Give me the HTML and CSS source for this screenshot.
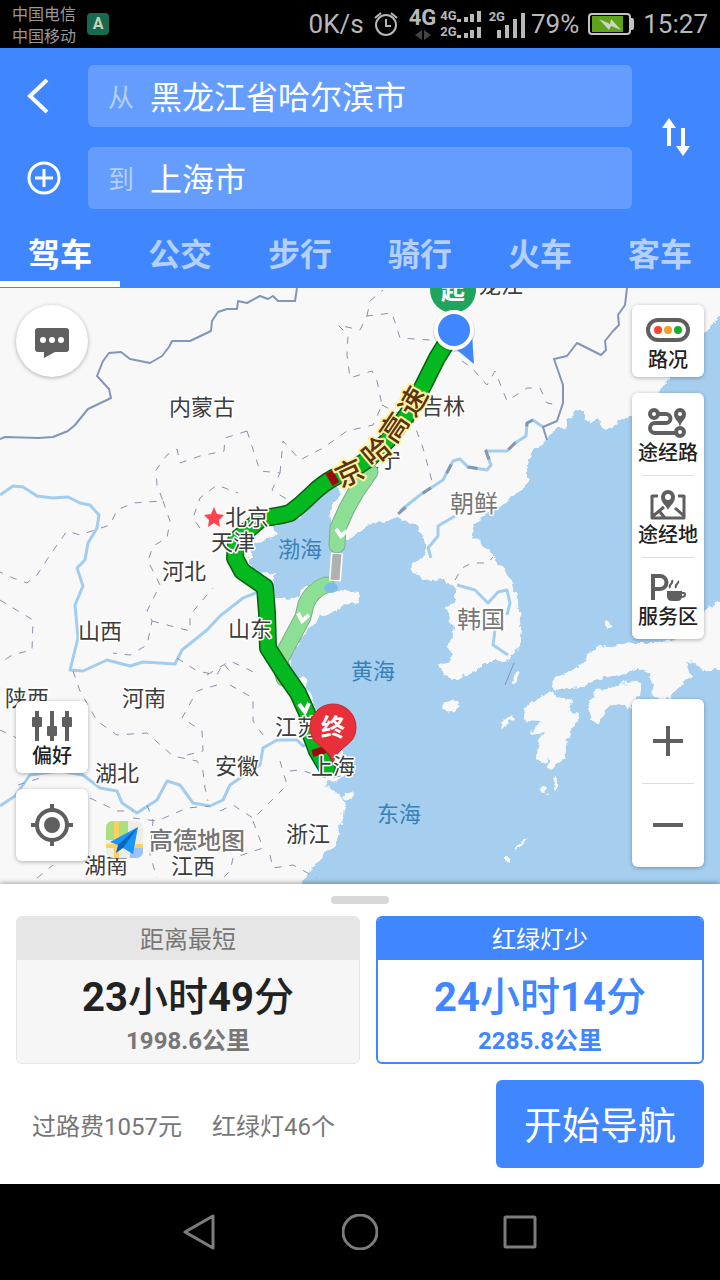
FILE: index.html
```html
<!DOCTYPE html>
<html lang="zh-CN">
<head>
    <meta charset="UTF-8">
    <meta name="viewport" content="width=device-width, initial-scale=1.0">
    <title>高德地图</title>
    <link rel="stylesheet" href="styles.css">
</head>
<body>
    <div class="app">
        <div class="status-bar">
            <div class="carriers">
                <span>中国电信</span>
                <span>中国移动</span>
            </div>
            <span class="status-badge">A</span>
            <div class="status-right">
                <span>0K/s</span>
                <svg class="status-alarm" viewBox="0 0 24 26" fill="none" stroke="currentColor" stroke-width="2">
                    <circle cx="12" cy="14" r="10"/>
                    <path d="M12 8v7h5M1 7l6-5M23 7l-6-5"/>
                </svg>
                <div class="net-type">
                    <span>4G</span>
                    <svg viewBox="0 0 16 10" fill="#444"><path d="M0 5l7-5v10zM16 5L9 0v10z"/></svg>
                </div>
                <div class="net-sims">
                    <div class="net-sim">
                        <span>4G</span>
                        <svg viewBox="0 0 24 12" fill="currentColor"><path d="M0 9h4v3H0zM7 7h4v5H7zM13 4h4v8h-4zM20 1h4v11h-4z"/></svg>
                    </div>
                    <div class="net-sim">
                        <span>2G</span>
                        <svg viewBox="0 0 24 12" fill="currentColor"><path d="M0 9h4v3H0zM7 7h4v5H7zM13 4h4v8h-4zM20 1h4v11h-4z"/></svg>
                    </div>
                </div>
                <div class="net-second">
                    <span>2G</span>
                    <svg viewBox="0 0 28 25" fill="currentColor"><path d="M0 17h4v8H0zM8 12h4v13H8zM16 6h4v19h-4zM24 0h4v25h-4z"/></svg>
                </div>
                <span>79%</span>
                <svg class="status-battery" viewBox="0 0 46 22">
                    <rect x="1" y="1" width="41" height="20" rx="3" fill="none" stroke="#c4c4c4" stroke-width="2"/>
                    <rect x="4" y="3" width="31" height="16" fill="#5fa31b"/>
                    <path d="M43 5h1q2 0 2 3v6q0 3-2 3h-1z" fill="#c4c4c4"/>
                    <path d="M11 6l11 5 1-5 10 11-10-4-2 4z" fill="#cdd6c4"/>
                </svg>
                <span>15:27</span>
            </div>
        </div>

        <header class="header">
            <form class="route-form">
                <button type="button" class="icon-button back" aria-label="返回">
                    <svg viewBox="0 0 22 36" fill="none" stroke="currentColor" stroke-width="4"><path d="M20 2L3 18l17 16"/></svg>
                </button>
                <div class="field">
                    <label for="from">从</label>
                    <input type="text" id="from" value="黑龙江省哈尔滨市">
                </div>
                <button type="button" class="icon-button swap" aria-label="交换起终点">
                    <svg viewBox="0 0 28 38" fill="currentColor"><path d="M7 0l7 10H9v18H5V10H0zM21 38l7-10h-5V10h-4v18h-5z"/></svg>
                </button>
                <button type="button" class="icon-button add" aria-label="添加途经点">
                    <svg viewBox="0 0 34 34" fill="none" stroke="currentColor" stroke-width="3"><circle cx="17" cy="17" r="15"/><path d="M17 8v18M8 17h18"/></svg>
                </button>
                <div class="field">
                    <label for="to">到</label>
                    <input type="text" id="to" value="上海市">
                </div>
            </form>
            <nav class="tabs">
                <a href="#" class="tab active">驾车</a>
                <a href="#" class="tab">公交</a>
                <a href="#" class="tab">步行</a>
                <a href="#" class="tab">骑行</a>
                <a href="#" class="tab">火车</a>
                <a href="#" class="tab">客车</a>
            </nav>
        </header>

        <main class="map">
            <svg class="map-canvas" viewBox="0 288 720 596" preserveAspectRatio="xMidYMid slice">
                <defs>
                    <filter id="coast" filterUnits="userSpaceOnUse" x="0" y="288" width="720" height="596">
                        <feTurbulence type="fractalNoise" baseFrequency="0.12" numOctaves="3" seed="4"/>
                        <feDisplacementMap in="SourceGraphic" scale="9" xChannelSelector="R" yChannelSelector="G"/>
                    </filter>
                </defs>

                <!-- 海洋与陆地 -->
                <rect class="land" x="0" y="288" width="720" height="596"/>
                <g filter="url(#coast)">
                    <path class="sea" d="M740 290L720 316 704 333 660 391 650 405 632 416 607 430 597 421 590 423 583 411 575 411 567 425 553 431 547 441 533 450 526 465 526 488 507 501 480 518 473 525 473 536 490 551 500 565 512 582 518 600 521 633 515 653 505 663 485 663 472 673 455 680 440 672 438 663 452 660 448 647 455 630 450 617 443 608 455 600 455 590 442 578 422 580 410 568 422 557 427 548 420 530 415 523 400 518 390 521 367 525 350 538 333 547 331 521 330 510 342 494 333 486 320 495 300 518 273 525 280 535 267 538 255 545 250 551 250 562 258 572 275 573 273 582 275 597 295 598 305 587 328 580 338 590 360 592 358 603 338 608 322 617 308 628 288 657 292 673 305 680 315 707 340 751 354 765 350 775 323 785 337 791 345 801 343 818 337 835 337 845 323 855 313 868 300 884 300 900 740 900z"/>
                    <!-- 日本 -->
                    <path class="land" d="M740 595L720 600 703 611 673 640 653 643 607 646 597 648 580 665 553 680 555 690 583 688 593 680 620 676 637 668 650 673 652 685 653 697 670 700 678 686 693 678 685 663 692 660 703 670 740 670z"/>
                    <path class="land" d="M550 691L557 696 572 701 570 710 578 715 577 721 567 738 565 758 550 771 547 764 549 755 544 763 537 761 538 741 543 733 532 735 533 728 541 722 525 721 522 710 537 698z"/>
                    <path class="land" d="M587 703L600 688 612 689 630 680 642 685 640 695 630 710 620 703 605 708 600 723 592 720z"/>
                    <ellipse class="land" cx="451" cy="706" rx="9" ry="5" transform="rotate(-15 451 706)"/>
                    <ellipse class="land" cx="516" cy="677" rx="2" ry="8" transform="rotate(15 516 677)"/>
                    <path class="land" d="M500 727l6-6 5-6 2 3-7 7-4 4zM513 848l6-7 8-3-5 6-7 6zM506 855l4 3-1 4-3-2z"/>
                    <ellipse class="land" cx="544" cy="790" rx="4" ry="3"/>
                    <ellipse class="land" cx="555" cy="783" rx="2" ry="6"/>
                    <ellipse class="land" cx="608" cy="625" rx="3" ry="2"/>
                    <ellipse class="land" cx="349" cy="796" rx="5" ry="3"/>
                </g>

                <!-- 河流 -->
                <g class="river">
                    <path d="M0 495L13 486 23 487 37 496 53 498 68 497 80 503 90 505 99 515 97 528 88 543 85 560 77 568 83 586 75 605 78 638 70 670 83 671 107 660 130 666 143 662 175 664 182 650 207 630 220 616 243 598 258 592"/>
                    <path d="M0 806L15 796 30 775 60 771 83 775 100 788 117 791 122 803 137 813 157 800 167 781 180 785 193 803 210 806 223 800 230 785 243 776 260 765 263 748 277 740 297 740 303 746 318 741"/>
                    <path d="M543 427L533 420 527 423 526 436 515 443 507 451 486 451 491 465 487 470 468 467 460 459 453 461 443 480 420 495 400 511"/>
                    <path d="M455 516L438 526 438 536 428 548 431 558M457 585L475 590 488 603 498 592 507 590 510 603 507 615M495 630L493 645 508 655"/>
                </g>

                <!-- 国界 -->
                <g class="border">
                    <path d="M0 439L5 437 38 438 53 437 68 431 75 425 88 409 111 398 109 389 97 376 103 361 109 353 121 352 130 359 150 363 162 356 169 347 172 341 190 341 211 331 212 321 218 312 227 309 237 309 238 301 247 303 260 296 268 299 273 296 278 301 295 301 297 288"/>
                    <path d="M627 288L625 305 618 315 619 325 613 331 605 341 606 350 601 355 577 343 567 356 554 359 563 385 563 403 557 421 543 427 547 440"/>
                    <path class="border-part" d="M533 420L527 423 526 436 515 443 507 451 486 451 491 465 487 470 468 467 460 459 453 461 443 480 420 495 398 514"/>
                </g>
                <path class="sea-line" d="M514 663L505 685"/>

                <!-- 省界 -->
                <g class="province">
                    <path d="M247 431L225 438 224 451 200 456 180 463 177 449 167 455 156 470 157 485 163 501 133 503 117 510 110 525 80 535 67 531 50 555 37 575 27 583 13 578 0 572"/>
                    <path d="M163 501L170 521 167 538 153 546 148 561 160 585 147 611 152 621 147 645 130 655 113 653"/>
                    <path d="M152 621L190 631 190 615 213 588M200 528L193 518 200 498 217 485 238 493"/>
                    <path d="M247 431L260 471 280 473 272 490 288 500M280 473L283 441 300 460 323 448 347 431 373 425 382 405 377 381 372 371 350 378 347 355 348 335 338 325 360 330 367 316 392 313 400 338 430 340M367 316L370 301 383 290"/>
                    <path d="M382 405L413 421 423 448 433 485M462 361L472 368 487 385 495 371 507 401 527 388 540 388 547 403 560 405"/>
                    <path d="M0 600L33 620 32 650 12 655 0 663M73 671L80 691 97 721 117 735 147 733 173 756 197 761 203 771 205 788 208 801"/>
                    <path d="M177 658L197 671 217 675 223 663 233 675M217 685L197 691 182 718 202 731 203 751 183 756M90 798L117 811 133 811M133 818L157 821 187 808 210 806M147 805L153 821 150 855 157 878"/>
                    <path d="M207 675L230 661 260 675M230 685L253 698 253 721 263 735M280 761L287 785 257 815 253 821 263 848 233 858 230 871 220 881M270 855L273 868 293 865 317 878M220 811L233 805 253 818M290 771L300 770 327 778 363 773"/>
                    <path d="M455 580L462 568 472 563 488 563 493 557M37 878L53 865M0 730L17 738M18 785L40 778"/>
                </g>

                <g class="label">
                    <text x="357" y="467">辽宁</text>
                    <text x="421" y="414">吉林</text>
                    <text x="479" y="293">龙江</text>
                </g>

                <!-- 备选路线 -->
                <path class="alt-edge" d="M370 472L356 492 347 508 338 528 337 545M326 585Q313 589 306 604L303 617 280 660 284 678"/>
                <path class="alt-line" d="M370 472L356 492 347 508 338 528 337 545M326 585Q313 589 306 604L303 617 280 660 284 678"/>
                <path class="ferry-edge" d="M337 553L335 581"/>
                <path class="ferry" d="M337 554L335 580"/>
                <ellipse cx="331" cy="588" rx="7" ry="5" fill="#7dbce8"/>

                <!-- 主路线 -->
                <path class="route-edge" d="M450 337L437 358 422 388 407 415 388 440 370 458 352 470 335 477Q322 484 312 494T290 513Q275 517 262 518L236 540 235 558 242 571 265 587 267 613 268 648 282 670 298 693 307 713 311 735 317 751 327 768"/>
                <path class="route-line" d="M450 337L437 358 422 388 407 415 388 440 370 458 352 470 335 477Q322 484 312 494T290 513Q275 517 262 518L236 540 235 558 242 571 265 587 267 613 268 648 282 670 298 693 307 713 311 735 317 751 327 768"/>
                <path class="jam" d="M329 480L336 476M318 748L320 755"/>
                <path class="arrow" d="M336 529l5 7 6-5M298 613l4 8 7-6M299 704l6 8 4-9"/>

                <g class="label">
                    <text x="169" y="415">内蒙古</text>
                    <text x="225" y="525">北京</text>
                    <text x="211" y="550">天津</text>
                    <text x="162" y="579">河北</text>
                    <text x="78" y="639">山西</text>
                    <text x="228" y="637">山东</text>
                    <text x="5" y="706">陕西</text>
                    <text x="122" y="706">河南</text>
                    <text x="275" y="735">江苏</text>
                    <text x="95" y="781">湖北</text>
                    <text x="215" y="774">安徽</text>
                    <text x="286" y="842">浙江</text>
                    <text x="84" y="873">湖南</text>
                    <text x="171" y="874">江西</text>
                </g>
                <g class="label country">
                    <text x="450" y="512">朝鲜</text>
                    <text x="457" y="628">韩国</text>
                </g>
                <g class="label water">
                    <text x="278" y="557">渤海</text>
                    <text x="351" y="679">黄海</text>
                    <text x="377" y="822">东海</text>
                </g>
                <path fill="#ff4350" d="M214 507l3 7 7 1-5 5 1 7-6-4-6 4 1-7-5-5 7-1z"/>

                <g class="road-name">
                    <text transform="translate(350 474) rotate(-25)" y="9">京</text>
                    <text transform="translate(377 452) rotate(-40)" y="9">哈</text>
                    <text transform="translate(395 428) rotate(-56)" y="9">高</text>
                    <text transform="translate(414 402) rotate(-60)" y="9">速</text>
                </g>

                <!-- 起点与终点 -->
                <circle cx="453" cy="290" r="23" fill="#1fa45e"/>
                <text class="pin-text" x="453" y="299">起</text>
                <circle cx="454" cy="331" r="21" fill="#000" opacity="0.12"/>
                <path d="M452 346L472 334 474 364z" fill="#3f86ff"/>
                <circle cx="454" cy="330" r="18" fill="#3f86ff" stroke="#fff" stroke-width="4"/>
                <path d="M333 704a23 23 0 0 1 23 23c0 14-9 17-15 23-4 4-7 8-8 14-1-6-4-10-8-14-6-6-15-9-15-23a23 23 0 0 1 23-23z" fill="#e8303a" stroke="#c4262f"/>
                <text class="pin-text" x="333" y="736">终</text>
                <g class="label">
                    <text x="311" y="774">上海</text>
                </g>

                <!-- 高德标志 -->
                <rect x="106" y="821" width="37" height="37" rx="7" fill="#eeede6"/>
                <path d="M113 821h15v19h-22v-12q0-7 7-7z" fill="#aadf82"/>
                <path d="M130 846h13v5q0 7-7 7h-6z" fill="#9bc2fb"/>
                <path d="M114 821h5v37h-5zM106 844h37v4h-37z" fill="#fbd262"/>
                <path d="M138 827l-28 15 8 3 15 9z" fill="#1c94fb"/>
                <path d="M138 827l-20 18-2 8 7-5z" fill="#0a67b8"/>
                <text class="logo-text" x="149" y="849">高德地图</text>
            </svg>

            <div class="controls controls-left">
                <button class="control round" aria-label="反馈">
                    <svg class="icon" viewBox="0 0 36 36"><path d="M4 5h28q3 0 3 3v18q0 3-3 3H21l-11 6v-6H4q-3 0-3-3V8q0-3 3-3z" fill="#5f5f5f"/><g fill="#fff"><circle cx="9" cy="17" r="3"/><circle cx="18" cy="17" r="3"/><circle cx="27" cy="17" r="3"/></g></svg>
                </button>
                <div class="stack">
                    <button class="control labelled">
                        <svg class="icon wide" viewBox="0 0 44 32" fill="#5f5f5f"><path d="M5 1h4v30H5zM20 1h4v30h-4zM35 1h4v30h-4z"/><rect x="2" y="7" width="10" height="10" rx="1"/><rect x="17" y="16" width="10" height="10" rx="1"/><rect x="32" y="7" width="10" height="10" rx="1"/></svg>
                        <span>偏好</span>
                    </button>
                    <button class="control" aria-label="定位">
                        <svg class="icon-large" viewBox="0 0 44 44" fill="none" stroke="#5f5f5f" stroke-width="4"><circle cx="22" cy="22" r="15"/><circle cx="22" cy="22" r="8" fill="#5f5f5f" stroke="none"/><path d="M22 1v7M22 36v7M1 22h7M36 22h7"/></svg>
                    </button>
                </div>
            </div>

            <div class="controls controls-right">
                <button class="control labelled">
                    <svg class="icon wide" viewBox="0 0 44 32"><rect x="2" y="6" width="40" height="20" rx="10" fill="none" stroke="#5f5f5f" stroke-width="4"/><circle cx="12" cy="16" r="4" fill="#fb4331"/><circle cx="22" cy="16" r="4" fill="#fc9d28"/><circle cx="32" cy="16" r="4" fill="#1aab2c"/></svg>
                    <span>路况</span>
                </button>
                <div class="control-group">
                    <button class="group-item labelled">
                        <svg class="icon wide" viewBox="0 0 44 32" fill="none" stroke="#5f5f5f" stroke-width="4"><circle cx="8" cy="7" r="4"/><circle cx="34" cy="25" r="4"/><path d="M12 7h8a4 4 0 0 1 0 9H9a5 5 0 0 0 0 10h21"/><path d="M34 20c-1-6-6-7-6-13a6 6 0 0 1 12 0c0 6-5 7-6 13z" fill="#5f5f5f" stroke="none"/><circle cx="34" cy="7" r="2" fill="#fff" stroke="none"/></svg>
                        <span>途经路</span>
                    </button>
                    <button class="group-item labelled">
                        <svg class="icon wide" viewBox="0 0 44 32" fill="none" stroke="#5f5f5f" stroke-width="3"><path d="M12 7H6v22h32V7h-6M7 27l11-9M38 27l-9-8M14 23l5 6" stroke-linejoin="round"/><path d="M22 21c-2-5-7-7-7-13a7 7 0 0 1 14 0c0 6-5 8-7 13z" fill="#5f5f5f" stroke="none"/><circle cx="22" cy="8" r="3" fill="#fff" stroke="none"/></svg>
                        <span>途经地</span>
                    </button>
                    <button class="group-item labelled">
                        <svg class="icon wide" viewBox="0 0 44 32" fill="none" stroke="#5f5f5f" stroke-width="4"><path d="M7 29V5h7a6 6 0 0 1 0 13H7"/><path d="M21 20h15v5q0 5-5 5h-5q-5 0-5-5z" fill="#5f5f5f" stroke="none"/><path d="M35 22h3q1 0 1 2t-4 2M24 17q-1-2 1-4t1-4M30 17q-1-2 1-4t1-3" stroke-width="2"/></svg>
                        <span>服务区</span>
                    </button>
                </div>
                <div class="control-group zoom">
                    <button class="group-item" aria-label="放大">
                        <svg class="icon" viewBox="0 0 36 36" stroke="#5f5f5f" stroke-width="4"><path d="M18 3v30M3 18h30"/></svg>
                    </button>
                    <button class="group-item" aria-label="缩小">
                        <svg class="icon" viewBox="0 0 36 36" stroke="#5f5f5f" stroke-width="4"><path d="M3 18h30"/></svg>
                    </button>
                </div>
            </div>
        </main>

        <section class="sheet">
            <div class="sheet-handle"></div>
            <div class="plans">
                <button class="plan">
                    <span class="plan-title">距离最短</span>
                    <span class="plan-time"><b>23</b>小时<b>49</b>分</span>
                    <span class="plan-distance">1998.6公里</span>
                </button>
                <button class="plan selected">
                    <span class="plan-title">红绿灯少</span>
                    <span class="plan-time"><b>24</b>小时<b>14</b>分</span>
                    <span class="plan-distance">2285.8公里</span>
                </button>
            </div>
            <div class="sheet-footer">
                <p class="trip-info"><span>过路费1057元</span><span>红绿灯46个</span></p>
                <button class="start-button">开始导航</button>
            </div>
        </section>

        <nav class="system-nav">
            <button aria-label="后退"><svg viewBox="0 0 36 36"><path d="M3 18L31 2v32z"/></svg></button>
            <button aria-label="主屏幕"><svg viewBox="0 0 36 36"><circle cx="18" cy="18" r="17"/></svg></button>
            <button aria-label="最近任务"><svg viewBox="0 0 36 36"><rect x="3" y="3" width="30" height="30" rx="1"/></svg></button>
        </nav>
    </div>
</body>
</html>
```
FILE: styles.css
```css
:root {
    --primary: #3f86ff;
    --field: #659dff;
    --tab: #b3d0ff;
    --status: #b8b8b8;
    --text: #222222;
    --text-secondary: #777777;
    --land: #f8f8f8;
    --sea: #a6cfef;
    --radius: 6px;
    --shadow: 0 1px 4px rgba(0, 0, 0, 0.3);
}

* {
    margin: 0;
    padding: 0;
    box-sizing: border-box;
    font-family: Roboto, 'Noto Sans CJK SC', sans-serif;
}

body {
    background: #000;
    color: var(--text);
}

button {
    border: none;
    background: none;
    color: inherit;
    cursor: pointer;
}

svg {
    display: block;
}

.app {
    min-height: 100vh;
    display: flex;
    flex-direction: column;
}

/* Status bar */
.status-bar {
    height: 48px;
    display: flex;
    align-items: center;
    padding: 0 12px;
    background: #000;
    color: var(--status);
}

.carriers {
    display: flex;
    flex-direction: column;
    font-size: 16px;
    line-height: 22px;
    padding-top: 4px;
    color: #999;
}

.status-badge {
    width: 22px;
    height: 22px;
    margin-left: 11px;
    border-radius: 4px;
    background: #17694f;
    color: #c9d3b8;
    font-size: 16px;
    font-weight: 700;
    line-height: 22px;
    text-align: center;
}

.status-right {
    display: flex;
    align-items: center;
    margin-left: auto;
    font-size: 26px;
    line-height: 48px;
}

.status-alarm {
    width: 24px;
    height: 26px;
    margin: 0 11px 0 10px;
}

.net-type {
    display: flex;
    flex-direction: column;
    align-items: center;
    gap: 2px;
    font-size: 22px;
    font-weight: 700;
    line-height: 20px;
}

.net-type svg {
    width: 16px;
    height: 10px;
}

.net-sims {
    margin: 0 8px 0 4px;
    font-size: 13px;
    font-weight: 700;
}

.net-sim {
    display: flex;
    align-items: center;
    line-height: 16px;
}

.net-sim svg {
    width: 24px;
    height: 12px;
}

.net-second {
    display: flex;
    font-size: 13px;
    font-weight: 700;
    line-height: 14px;
}

.net-second svg {
    width: 28px;
    height: 25px;
    margin: 3px 6px 0 -8px;
}

.status-battery {
    width: 46px;
    height: 22px;
    margin: 0 9px;
}

/* Header */
.header {
    background: var(--primary);
    color: #fff;
    padding-top: 17px;
}

.route-form {
    display: grid;
    grid-template-columns: 88px 1fr 88px;
    row-gap: 20px;
}

.icon-button {
    display: flex;
    align-items: center;
    justify-content: center;
}

.back svg {
    width: 22px;
    height: 36px;
    margin-right: 12px;
}

.add svg {
    width: 34px;
    height: 34px;
}

.swap {
    grid-column: 3;
    grid-row: 1 / 3;
}

.swap svg {
    width: 28px;
    height: 38px;
}

.field {
    height: 62px;
    display: flex;
    align-items: center;
    gap: 16px;
    padding: 0 20px 2px;
    background: var(--field);
    border-radius: var(--radius);
}

.field label {
    font-size: 26px;
    color: var(--tab);
}

.field input {
    flex: 1;
    min-width: 0;
    border: none;
    outline: none;
    background: none;
    color: #fff;
    font-size: 32px;
}

.tabs {
    display: flex;
    height: 79px;
    padding-bottom: 1px;
}

.tab {
    flex: 1;
    padding-top: 10px;
    border-bottom: 6px solid transparent;
    color: var(--tab);
    font-size: 32px;
    font-weight: 700;
    line-height: 72px;
    text-align: center;
    text-decoration: none;
}

.tab.active {
    color: #fff;
    border-bottom-color: #fff;
}

/* Map */
.map {
    flex: 1;
    position: relative;
    min-height: 560px;
    overflow: hidden;
    background: var(--land);
}

.map-canvas {
    position: absolute;
    width: 100%;
    height: 100%;
}

.land {
    fill: var(--land);
}

.sea {
    fill: var(--sea);
}

.river {
    fill: none;
    stroke: #a3cdee;
    stroke-width: 3;
    stroke-linejoin: round;
}

.border {
    fill: none;
    stroke: #8196b8;
    stroke-width: 2;
    stroke-linejoin: round;
}

.border-part {
    stroke-dasharray: 10 22;
    stroke-width: 3;
}

.sea-line {
    stroke: #7f93b5;
}

.province {
    fill: none;
    stroke: #8a91aa;
    stroke-width: 1;
    stroke-dasharray: 7 8;
}

.alt-edge,
.alt-line,
.route-edge,
.route-line {
    fill: none;
    stroke-linejoin: round;
    stroke-linecap: round;
}

.alt-edge {
    stroke: #7fac8c;
    stroke-width: 17;
}

.alt-line {
    stroke: #8cdf94;
    stroke-width: 15;
}

.ferry-edge {
    stroke: #fff;
    stroke-width: 12;
}

.ferry {
    stroke: #b0b0b0;
    stroke-width: 9;
}

.route-edge {
    stroke: #06600f;
    stroke-width: 18;
}

.route-line {
    stroke: #04b820;
    stroke-width: 15;
}

.jam {
    stroke: #9c0b10;
    stroke-width: 14;
}

.arrow {
    fill: none;
    stroke: #fff;
    stroke-width: 4;
}

.label {
    font-size: 22px;
    fill: #3c3c3c;
    stroke: #fff;
    stroke-width: 3;
    stroke-linejoin: round;
    paint-order: stroke;
}

.country {
    font-size: 24px;
    fill: #777;
}

.water {
    fill: #3a80b8;
    stroke: none;
}

.road-name {
    font-size: 28px;
    font-weight: 500;
    fill: #5c3210;
    stroke: #fdf3a4;
    stroke-width: 4;
    stroke-linejoin: round;
    paint-order: stroke;
    text-anchor: middle;
}

.pin-text {
    font-size: 24px;
    font-weight: 700;
    fill: #fff;
    text-anchor: middle;
}

.logo-text {
    font-size: 24px;
    font-weight: 500;
    fill: #757575;
    stroke: #fff;
    stroke-width: 3;
    paint-order: stroke;
}

.controls {
    position: absolute;
    top: 17px;
    display: flex;
    flex-direction: column;
    gap: 16px;
    width: 72px;
}

.controls-left {
    left: 16px;
    bottom: 23px;
    justify-content: space-between;
}

.controls-right {
    right: 16px;
    bottom: 17px;
}

.stack {
    display: flex;
    flex-direction: column;
    gap: 16px;
}

.control,
.group-item {
    width: 100%;
    display: flex;
    flex-direction: column;
    align-items: center;
    justify-content: center;
    font-size: 20px;
    font-weight: 500;
    line-height: 26px;
    color: var(--text);
}

.control {
    height: 72px;
    background: #fff;
    border-radius: var(--radius);
    box-shadow: var(--shadow);
}

.labelled {
    gap: 1px;
    padding-top: 4px;
}

.round {
    border-radius: 50%;
}

.control-group {
    background: #fff;
    border-radius: var(--radius);
    box-shadow: var(--shadow);
}

.group-item {
    position: relative;
    height: 82px;
}

.group-item + .group-item::before {
    content: '';
    position: absolute;
    top: 0;
    left: 10px;
    right: 10px;
    height: 1px;
    background: #ddd;
}

.zoom {
    margin-top: auto;
}

.zoom .group-item {
    height: 84px;
}

.icon {
    width: 36px;
    height: 36px;
}

.icon.wide {
    width: 44px;
    height: 32px;
}

.icon-large {
    width: 44px;
    height: 44px;
}

/* Route sheet */
.sheet {
    position: relative;
    padding: 12px 16px 16px;
    background: #fff;
    box-shadow: 0 -1px 5px rgba(0, 0, 0, 0.35);
}

.sheet-handle {
    width: 58px;
    height: 8px;
    margin: 0 auto 12px;
    border-radius: 4px;
    background: #d8d8d8;
}

.plans {
    display: grid;
    grid-template-columns: 344fr 328fr;
    gap: 16px;
}

.plan {
    height: 148px;
    display: flex;
    flex-direction: column;
    overflow: hidden;
    border: 1px solid #e6e6e6;
    border-radius: var(--radius);
    background: #f6f6f6;
    text-align: center;
}

.plan span {
    width: 100%;
}

.plan-title {
    height: 43px;
    margin-bottom: 14px;
    background: #e6e6e6;
    color: var(--text-secondary);
    font-size: 24px;
    line-height: 46px;
}

.plan-time {
    font-size: 40px;
    font-weight: 500;
    line-height: 48px;
}

.plan-distance {
    color: var(--text-secondary);
    font-size: 24px;
    font-weight: 700;
    line-height: 38px;
}

.plan.selected {
    border: 2px solid var(--primary);
    background: #fff;
    color: var(--primary);
}

.selected .plan-title {
    height: 42px;
    background: var(--primary);
    color: #fff;
    line-height: 44px;
}

.selected .plan-distance {
    color: var(--primary);
}

.sheet-footer {
    display: flex;
    align-items: center;
    justify-content: space-between;
    margin-top: 16px;
    padding-left: 16px;
}

.trip-info {
    display: flex;
    gap: 30px;
    color: var(--text-secondary);
    font-size: 24px;
}

.start-button {
    height: 88px;
    padding: 0 28px 4px;
    border-radius: var(--radius);
    background: var(--primary);
    color: #fff;
    font-size: 38px;
}

/* System navigation */
.system-nav {
    height: 96px;
    display: flex;
    justify-content: center;
    background: #000;
}

.system-nav button {
    width: 160px;
    display: flex;
    align-items: center;
    justify-content: center;
}

.system-nav svg {
    width: 36px;
    height: 36px;
    fill: none;
    stroke: #7d7d7d;
    stroke-width: 3;
    stroke-linejoin: round;
}
```
